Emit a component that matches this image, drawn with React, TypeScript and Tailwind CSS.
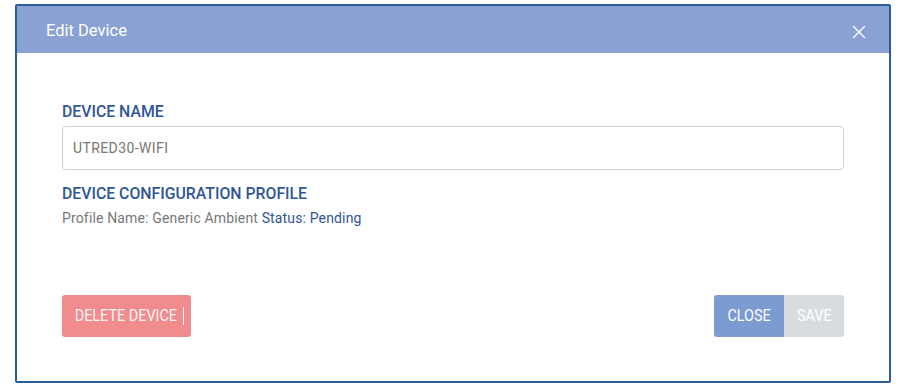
import { X } from "lucide-react";

export default function App() {
  return (
    <div className="w-[901px] h-[385px] bg-white pl-[15px] pt-[4px] font-['Roboto',sans-serif]">
      <div className="w-[876px] h-[379px] border-2 border-[#2c5c9c] rounded-[2px] flex flex-col bg-white">
        <div className="h-[47px] bg-[#8aa1d3] flex items-center justify-between pl-[29px] pr-[19px] pt-[4px]">
          <span className="text-white text-[16.5px]">Edit Device</span>
          <X className="text-white w-[22px] h-[22px]" strokeWidth={1.5} />
        </div>
        <div className="flex-1 flex flex-col pl-[45px] pr-[45px] pt-[48px] pb-[44px]">
          <h2 className="text-[#2f5597] text-[17px] leading-[20px] font-medium origin-left scale-x-[0.93] w-fit">
            DEVICE NAME
          </h2>
          <div className="mt-[5px] h-[44px] border border-[#cfcfcf] rounded-[4px] flex items-center px-[10px]">
            <span className="text-[#777] text-[14px] tracking-[0.4px]">UTRED30-WIFI</span>
          </div>
          <h2 className="mt-[13px] text-[#2f5597] text-[17px] leading-[20px] font-medium origin-left scale-x-[0.93] w-fit">
            DEVICE CONFIGURATION PROFILE
          </h2>
          <p className="mt-[5px] text-[14px] tracking-[0.15px] text-[#777]">
            Profile Name: Generic Ambient <span className="text-[#2f5597]">Status: Pending</span>
          </p>
          <div className="mt-auto flex justify-between items-end">
            <button className="h-[42px] w-[129px] bg-[#f08b8e] rounded-[3px] text-[#fff5f5] text-[16px] flex items-center justify-center">
              <span className="origin-center scale-x-[0.9] inline-block">DELETE DEVICE</span>
              <span className="w-px h-[18px] bg-white ml-[1px]" />
            </button>
            <div className="flex">
              <button className="h-[42px] w-[70px] bg-[#7b9bd1] rounded-l-[3px] text-white text-[16px]">
                <span className="inline-block scale-x-[0.9]">CLOSE</span>
              </button>
              <button className="h-[42px] w-[60px] bg-[#d9dcdf] rounded-r-[3px] text-white text-[16px]">
                <span className="inline-block scale-x-[0.9]">SAVE</span>
              </button>
            </div>
          </div>
        </div>
      </div>
    </div>
  );
}
